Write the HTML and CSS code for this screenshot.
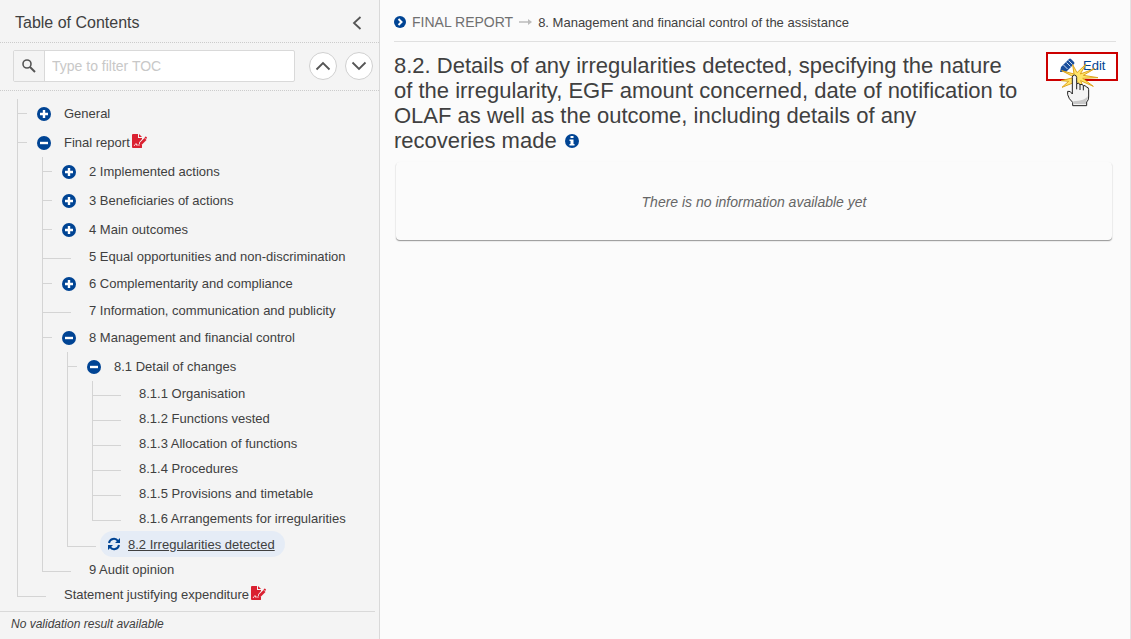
FILE: index.html
```html
<!DOCTYPE html>
<html lang="en">
<head>
  <meta charset="UTF-8" />
  <title>Final report</title>
  <link rel="stylesheet" href="styles.css">
</head>
<body>
  <!-- shared icons -->
  <svg class="sprite" aria-hidden="true">
    <symbol id="plus" viewBox="0 0 14 14">
      <circle cx="7" cy="7" r="7" fill="#004494" />
      <path d="M7 3v8M3 7h8" stroke="#fff" stroke-width="2.4" />
    </symbol>
    <symbol id="minus" viewBox="0 0 14 14">
      <circle cx="7" cy="7" r="7" fill="#004494" />
      <path d="M3 7h8" stroke="#fff" stroke-width="2.4" />
    </symbol>
    <symbol id="unsigned" viewBox="0 0 15 14">
      <path d="M1 0h5v4h4v1L7 8.500v2h3v3q0 .5-1 .5H1q-1 0-1-1V1q0-1 1-1z" fill="#da2131" />
      <path d="M7 0l3 3H7z" fill="#da2131" />
      <path d="M2 12l2-2.500 1 2L6 10.500 7.500 12" fill="none" stroke="#fff" stroke-width=".8" />
      <path d="M7.500 11.500l.5-3L12.500 4l2 2L10 10.500z" fill="#da2131" />
      <path d="M12.500 3.500l1-1q1.500 0 1.500 1.500l-1 1z" fill="#da2131" />
    </symbol>
  </svg>

  <div class="layout">
    <aside class="sidebar">
      <header class="toc-header">
        <h2>Table of Contents</h2>
        <button class="collapse" aria-label="Collapse">
          <svg width="10" height="14" viewBox="0 0 10 14"><path d="M8.500 1L2 7l6.500 6" fill="none" stroke="#555" stroke-width="1.800" /></svg>
        </button>
      </header>

      <div class="toc-filter">
        <div class="search">
          <label for="filter" aria-label="Filter">
            <svg width="14" height="14" viewBox="0 0 14 14"><circle cx="5" cy="5" r="4" fill="none" stroke="#555" stroke-width="1.600" /><path d="M8 8l5 5" stroke="#555" stroke-width="2" /></svg>
          </label>
          <input id="filter" type="text" placeholder="Type to filter TOC" />
        </div>
        <button class="round" aria-label="Previous">
          <svg width="16" height="10" viewBox="0 0 16 10"><path d="M1.500 8.500L8 2l6.500 6.500" fill="none" stroke="#555" stroke-width="1.800" /></svg>
        </button>
        <button class="round" aria-label="Next">
          <svg width="16" height="10" viewBox="0 0 16 10"><path d="M1.500 1.500L8 8l6.500-6.500" fill="none" stroke="#555" stroke-width="1.800" /></svg>
        </button>
      </div>

      <nav class="toc">
        <ul class="tree">
          <li>
            <div class="row branch"><button aria-label="Expand"><svg><use href="#plus" /></svg></button><a href="#">General</a></div>
          </li>
          <li>
            <div class="row branch"><button aria-label="Collapse"><svg><use href="#minus" /></svg></button><a href="#">Final report</a><svg class="flag"><use href="#unsigned" /></svg></div>
            <ul>
              <li><div class="row branch"><button aria-label="Expand"><svg><use href="#plus" /></svg></button><a href="#">2 Implemented actions</a></div></li>
              <li><div class="row branch"><button aria-label="Expand"><svg><use href="#plus" /></svg></button><a href="#">3 Beneficiaries of actions</a></div></li>
              <li><div class="row branch"><button aria-label="Expand"><svg><use href="#plus" /></svg></button><a href="#">4 Main outcomes</a></div></li>
              <li><div class="row leaf"><a href="#">5 Equal opportunities and non-discrimination</a></div></li>
              <li><div class="row branch"><button aria-label="Expand"><svg><use href="#plus" /></svg></button><a href="#">6 Complementarity and compliance</a></div></li>
              <li><div class="row leaf"><a href="#">7 Information, communication and publicity</a></div></li>
              <li>
                <div class="row branch"><button aria-label="Collapse"><svg><use href="#minus" /></svg></button><a href="#">8 Management and financial control</a></div>
                <ul>
                  <li>
                    <div class="row branch"><button aria-label="Collapse"><svg><use href="#minus" /></svg></button><a href="#">8.1 Detail of changes</a></div>
                    <ul>
                      <li><div class="row leaf"><a href="#">8.1.1 Organisation</a></div></li>
                      <li><div class="row leaf"><a href="#">8.1.2 Functions vested</a></div></li>
                      <li><div class="row leaf"><a href="#">8.1.3 Allocation of functions</a></div></li>
                      <li><div class="row leaf"><a href="#">8.1.4 Procedures</a></div></li>
                      <li><div class="row leaf"><a href="#">8.1.5 Provisions and timetable</a></div></li>
                      <li><div class="row leaf"><a href="#">8.1.6 Arrangements for irregularities</a></div></li>
                    </ul>
                  </li>
                  <li>
                    <div class="row leaf selected">
                      <a href="#">
                        <svg viewBox="0 0 14 14"><path d="M2 6a5 5 0 0 1 9-2M12 8a5 5 0 0 1-9 2" fill="none" stroke="#004494" stroke-width="2" /><path d="M13 1v5H8zM1 13V8h5z" fill="#004494" /></svg>
                        <span>8.2 Irregularities detected</span>
                      </a>
                    </div>
                  </li>
                </ul>
              </li>
              <li><div class="row leaf"><a href="#">9 Audit opinion</a></div></li>
            </ul>
          </li>
          <li><div class="row leaf"><a href="#">Statement justifying expenditure</a><svg class="flag"><use href="#unsigned" /></svg></div></li>
        </ul>
      </nav>

      <footer class="validation">No validation result available</footer>
    </aside>

    <main class="content">
      <nav class="breadcrumb">
        <svg width="12" height="12" viewBox="0 0 12 12"><circle cx="6" cy="6" r="6" fill="#004494" /><path d="M4.500 3l3 3-3 3" fill="none" stroke="#fff" stroke-width="2" /></svg>
        <a href="#">FINAL REPORT</a>
        <svg width="13" height="6" viewBox="0 0 13 6"><path d="M0 3h10" stroke="#bbb" stroke-width="1.500" /><path d="M9 0l4 3-4 3z" fill="#bbb" /></svg>
        <span>8. Management and financial control of the assistance</span>
      </nav>

      <div class="section-head">
        <h1>8.2. Details of any irregularities detected, specifying the nature of the irregularity, EGF amount concerned, date of notification to OLAF as well as the outcome, including details of any recoveries made
          <svg class="info" width="14" height="14" viewBox="0 0 14 14"><circle cx="7" cy="7" r="7" fill="#004494" /><path d="M5.500 2h3v2h-3zM4.500 5.500h4V10h1v1.500h-5V10h1V7h-1z" fill="#fff" /></svg>
        </h1>
        <div class="edit-box">
          <button class="edit">
            <svg width="15" height="15" viewBox="0 0 15 15"><path d="M0 14l1-5 8-8q1-1 2 0l3 3q1 1 0 2l-8 8z" fill="#1a4f9c" /><path d="M8.500 2.500l4 4M6.500 4.500l4 4M3.500 7l4 4" stroke="#c9daf0" stroke-width="1" /></svg>
            Edit
          </button>
          <!-- hand pointer with click burst -->
          <svg class="pointer" width="42" height="48" viewBox="90 60 126 144" aria-hidden="true">
            <path d="M134 112L95 92l37 10-4-28 13 24 27-26-17 30 43-16-34 20 44 7-46 2 32 24-38-17 8 20-20-18-14 6-30 12 20-18-22-2z" fill="#ffe568" stroke="#dfa520" stroke-width="3" />
            <path d="M127 162V112q0-7 6-7t7 7v19q7-3 10 3 7-3 10 3 7-2 9 4 7 0 7 8v22q0 10-6 15v11h-42v-10q-12-10-15-23v-10q8-3 14 8z" fill="#f4f4f4" stroke="#222" stroke-width="3" stroke-linejoin="round" />
            <path d="M130 192h38v-8q5-6 6-16-8 14-44 16z" fill="#c8c8c8" />
            <path d="M140 131v17M150 134v16M160 137v14" stroke="#222" stroke-width="3" />
          </svg>
        </div>
      </div>

      <section class="card">There is no information available yet</section>
    </main>
  </div>
</body>
</html>
```
FILE: styles.css
```css
* {
  box-sizing: border-box;
}

body {
  margin: 0;
  font-family: "Liberation Sans", Arial, sans-serif;
  font-size: 13px;
  color: #404040;
  background-color: #fbfbfb;
}

h1, h2 {
  margin: 0;
  font-weight: normal;
}

button {
  padding: 0;
  border: none;
  background: none;
  font: inherit;
  color: inherit;
  cursor: pointer;
}

a {
  color: inherit;
  text-decoration: none;
}

svg {
  display: block;
  flex: none;
}

.sprite {
  display: none;
}

.layout {
  display: flex;
  min-height: 100vh;
}

/* sidebar */
.sidebar {
  flex: 0 0 380px;
  display: flex;
  flex-direction: column;
  background-color: #f4f4f4;
  border-right: 1px solid #d9d9d9;
}

.toc-header {
  display: flex;
  align-items: center;
  justify-content: space-between;
  height: 43px;
  padding: 4px 17px 0 15px;
  border-bottom: 1px dotted #ccc;
}

.toc-header h2 {
  font-size: 16px;
}

.toc-filter {
  display: flex;
  align-items: center;
  gap: 8px;
  height: 48px;
  padding: 0 6px 1px 13px;
  border-bottom: 1px dotted #ccc;
}

.search {
  flex: 1;
  display: flex;
  height: 32px;
  margin-right: 6px;
  border: 1px solid #d9d9d9;
  border-radius: 2px;
  background-color: #fff;
}

.search label {
  display: grid;
  place-items: center;
  width: 31px;
  border-right: 1px solid #d9d9d9;
  background-color: #f4f4f4;
}

.search input {
  flex: 1;
  min-width: 0;
  padding: 0 7px;
  border: none;
  background: none;
  font: inherit;
  font-size: 14px;
}

.search input::placeholder {
  color: #c8c8c8;
}

.round {
  display: grid;
  place-items: center;
  width: 28px;
  height: 28px;
  border: 1px solid #d0d0d0;
  border-radius: 50%;
  background-color: #fff;
}

/* tree */
.toc {
  flex: 1;
  padding: 8px 0 0 17px;
}

.tree, .tree ul {
  margin: 0;
  padding: 0;
  list-style: none;
}

.tree ul {
  margin-left: 25px;
}

.tree li {
  background: linear-gradient(#d4d4d4, #d4d4d4) no-repeat 0 0 / 1px 100%;
}

.tree li:last-child {
  background-size: 1px 15px;
}

.row {
  display: flex;
  align-items: center;
  height: 25px;
}

.row::before {
  content: "";
  width: 10px;
  height: 1px;
  background-color: #d4d4d4;
}

.row.branch {
  height: 29px;
}

.row button {
  margin: 0 13px 0 10px;
}

.row button svg {
  width: 14px;
  height: 14px;
}

.row.leaf::before {
  width: 29px;
  margin: 4px 18px 0 0;
}

.row .flag {
  width: 15px;
  height: 14px;
  margin: 0 0 4px 2px;
}

.row.selected {
  height: 26px;
}

.row.selected::before {
  margin-right: 4px;
}

.selected a {
  display: flex;
  align-items: center;
  gap: 7px;
  height: 26px;
  padding: 0 10px 0 7px;
  border-radius: 13px;
  background-color: #e5ecf6;
  text-decoration: underline;
}

.selected svg {
  width: 14px;
  height: 14px;
}

.validation {
  margin-right: 4px;
  padding: 4px 11px 7px;
  border-top: 1px solid #d9d9d9;
  font-size: 12px;
  line-height: 16px;
  font-style: italic;
}

/* content */
.content {
  flex: 1;
  padding: 0 14px;
  border-right: 1px solid #e3e3e3;
}

.breadcrumb {
  display: flex;
  align-items: center;
  gap: 6px;
  height: 42px;
  padding-top: 3px;
  border-bottom: 1px solid #e0e0e0;
}

.breadcrumb a {
  font-size: 14px;
  color: #707070;
}

.section-head {
  display: flex;
  align-items: flex-start;
  justify-content: space-between;
  gap: 26px;
  padding-top: 10px;
}

.section-head h1 {
  flex: 1;
  padding-top: 1px;
  font-size: 22px;
  line-height: 25px;
}

.info {
  display: inline-block;
  margin-left: 2px;
}

.edit-box {
  position: relative;
  border: 2px solid #c00;
  margin-right: -2px;
  background-color: #fff;
}

.edit {
  display: flex;
  align-items: center;
  gap: 8px;
  width: 68px;
  height: 25px;
  padding: 0 0 2px 12px;
  color: #004494;
}

.pointer {
  position: absolute;
  top: 6px;
  left: 12px;
  pointer-events: none;
}

.card {
  display: grid;
  place-items: center;
  height: 78px;
  margin: 9px 4px 0 2px;
  padding-top: 2px;
  border-radius: 4px;
  box-shadow: 0 1px 1px #999, 0 1px 2px rgba(0, 0, 0, 0.1);
  font-size: 14px;
  font-style: italic;
  color: #666;
}
```
